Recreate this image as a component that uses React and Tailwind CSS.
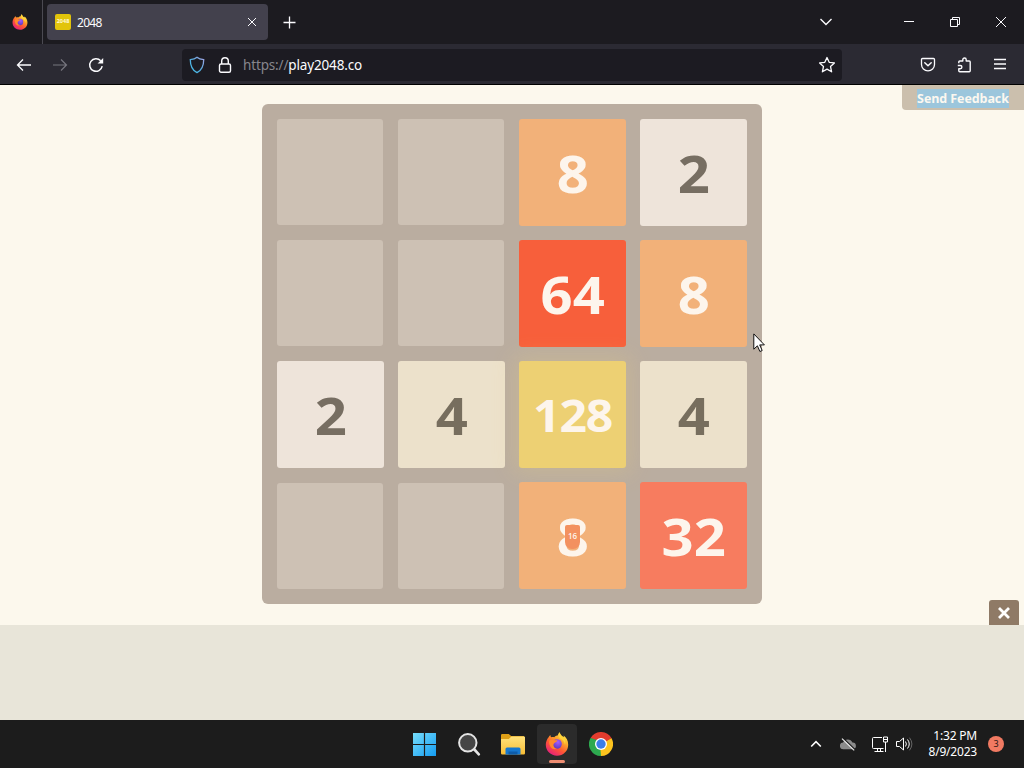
import React from 'react';

const TILE_STYLES = {
  0: 'size-[106.250px] bg-[#cdc1b4]',
  2: 'size-[107px] bg-[#eee4da] text-[#776e62] text-[52px]',
  4: 'size-[107px] bg-[#ece1cb] text-[#776e5e] text-[52px]',
  8: 'size-[107px] bg-[#f2b179] text-[#fdf5ec] text-[52px]',
  32: 'size-[107px] bg-[#f77c5f] text-[#fdf5ec] text-[52px]',
  64: 'size-[107px] bg-[#f75f3b] text-[#fdf5ec] text-[52px]',
  128: 'size-[107px] bg-[#edd073] text-[#fdf5ec] text-[44.500px] tracking-[-1px] shadow-[0_0_22px_6px_rgba(243,215,116,0.2)]',
};

const board = [
  [0, 0, 8, 2],
  [0, 0, 64, 8],
  [2, 4, 128, 4],
  [0, 0, 8, 32],
];

const Firefox = ({ id, className }) => (
  <svg viewBox="0 0 24 24" className={className}>
    <defs>
      <linearGradient id={`${id}-body`} x1="0.85" y1="0.05" x2="0.25" y2="0.95">
        <stop offset="0" stopColor="#fff44f" />
        <stop offset="0.35" stopColor="#ffa22a" />
        <stop offset="0.65" stopColor="#ff5634" />
        <stop offset="1" stopColor="#e6217a" />
      </linearGradient>
      <radialGradient id={`${id}-globe`} cx="0.6" cy="0.3" r="0.8">
        <stop offset="0" stopColor="#a45cff" />
        <stop offset="1" stopColor="#5334b5" />
      </radialGradient>
    </defs>
    <path
      fill={`url(#${id}-body)`}
      d="M3.6 5.3C4 4.4 4.7 3.6 5.4 3.1c0 1 .3 1.7.7 2.2 1-.4 2.1-.4 3.1-.1C10.7 4 12 3.4 13 3.3c0-1 .6-2.2 1.7-3 .5 2.5 2.1 3.6 3.8 5 .3-.4.3-1 .1-1.7 2.8 1.900 4.600 5.200 4.600 9.100C23.200 19 18.200 23.700 12 23.700S.8 19 .8 12.800c0-2.900 1.100-5.500 2.800-7.500z"
    />
    <circle cx="12" cy="12" r="4.800" fill={`url(#${id}-globe)`} />
    <path
      fill="#ff8a2b"
      d="M4.200 8.700c1.700-1.500 4-1.600 5.700-.5 1 .1 2.200-.2 2.600.5-.3 1-1.900 1.200-2.400 1.900-.8.700-1.600 1.400-1.700 2.600.2 2 1.900 3.400 3.700 3.400-2.300 1.200-4.900.4-6.300-1.400-1.200-1.700-2-4.200-1.600-6.500z"
    />
    <path fill="#ffd43a" d="M14.700.3c.5 2.500 2.100 3.600 3.800 5 2 1.900 2.300 4.800 1.500 7.700-.3-3-2.300-5.300-4.700-6.400C13.300 5.500 13 3.300 14.700.3z" />
  </svg>
);

const Chrome = () => (
  <svg viewBox="0 0 24 24" className="size-6">
    <path fill="#e33b2e" d="M12 12 1.600 6A12 12 0 0 1 22.400 6z" />
    <path fill="#fcc31e" d="M12 12 22.400 6A12 12 0 0 1 12 24z" />
    <path fill="#2da94f" d="M12 12v12A12 12 0 0 1 1.600 6z" />
    <path fill="#e33b2e" d="M12 6h10.400L17 9.500z" />
    <path fill="#fcc31e" d="M17.200 15 12 24l-.5-6z" />
    <path fill="#2da94f" d="M6.800 15 1.600 6 8 8z" />
    <circle cx="12" cy="12" r="6" fill="#fff" />
    <circle cx="12" cy="12" r="4.700" fill="#3b7de9" />
  </svg>
);

const TabBar = () => (
  <div className="flex h-11 bg-[#1c1b20] text-[#fbfbfe]">
    <div className="flex w-[43px] items-center justify-center border-r border-[#4b4a52] pr-0.5">
      <Firefox id="view" className="size-4" />
    </div>
    <div className="mt-1 ml-1 flex h-9 w-[221px] items-center rounded-[4px] bg-[#43414d] pl-2 pr-[10px]">
      <div className="flex size-4 items-center justify-center rounded-[2px] bg-[#e2c40b] text-[5.500px] font-bold leading-none text-[#fff9d8]">
        2048
      </div>
      <span className="mt-px ml-1.5 grow text-[12px] tracking-[-0.700px]">2048</span>
      <svg viewBox="0 0 12 12" className="size-3" stroke="currentColor" strokeWidth="1">
        <path d="M2 2l8 8M10 2l-8 8" />
      </svg>
    </div>
    <svg viewBox="0 0 14 14" className="mt-4 ml-[15px] size-[14px]" stroke="currentColor" strokeWidth="1.300">
      <path d="M6.500 .5v12M.5 6.500h12" />
    </svg>
    <div className="grow" />
    <svg viewBox="0 0 14 14" className="mt-[15px] mr-[70px] size-[14px]" fill="none" stroke="currentColor" strokeWidth="1.400">
      <path d="M1.500 4 7 9.500 12.500 4" />
    </svg>
    <svg viewBox="0 0 12 12" className="mt-4 mr-[34px] size-3" stroke="currentColor">
      <path d="M1 5.500h10" />
    </svg>
    <svg viewBox="0 0 12 12" className="mt-4 mr-[34px] size-3" fill="none" stroke="currentColor">
      <path d="M1.500 3.500h7v7h-7zM3.500 3.500v-2h7v7h-2" />
    </svg>
    <svg viewBox="0 0 12 12" className="mt-4 mr-[17px] size-3" stroke="currentColor">
      <path d="M1 1l10 10M11 1 1 11" />
    </svg>
  </div>
);

const NavBar = () => (
  <div className="flex h-[41px] items-center border-b border-black bg-[#2b2a33] pt-px text-[#fbfbfe]">
    <svg viewBox="0 0 16 16" className="ml-4 size-4" fill="none" stroke="currentColor" strokeWidth="1.300">
      <path d="M15 8H1.500M7 2.500 1.500 8 7 13.500" />
    </svg>
    <svg viewBox="0 0 16 16" className="ml-5 size-4 text-[#77767f]" fill="none" stroke="currentColor" strokeWidth="1.200">
      <path d="M1 8h13.500M9 2.500 14.500 8 9 13.500" />
    </svg>
    <svg viewBox="0 0 16 16" className="ml-5 size-4" fill="none" stroke="currentColor" strokeWidth="1.500">
      <path d="M14.200 9.200A6.300 6.300 0 1 1 12.700 3.800" />
      <path d="M15.200 1v5.600H9.600z" fill="currentColor" stroke="none" />
    </svg>

    <div className="ml-[78px] flex h-8 w-[660px] items-center rounded-[4px] bg-[#1c1b22] pl-[7px] pr-[6px]">
      <svg viewBox="0 0 16 18" className="h-[18px] w-4" fill="none" strokeWidth="1.300">
        <defs>
          <linearGradient id="shield" x1="1" y1="0" x2="0" y2="1">
            <stop offset="0" stopColor="#a5a4e6" />
            <stop offset="0.500" stopColor="#55a9da" />
            <stop offset="1" stopColor="#43c3ef" />
          </linearGradient>
        </defs>
        <path stroke="url(#shield)" d="M8 1.300C6.500 2.600 4 3.400 1.300 3.700c0 6.300 1.400 10.300 6.700 12.900 5.300-2.600 6.700-6.600 6.700-12.900C12 3.400 9.500 2.600 8 1.300z" />
      </svg>
      <svg viewBox="0 0 14 18" className="ml-[13px] h-[18px] w-[14px]" fill="none" stroke="currentColor" strokeWidth="1.400">
        <rect x="1.500" y="8" width="11" height="8.200" rx="1.500" />
        <path d="M3.700 8V5a3.300 3.300 0 0 1 6.600 0v3" />
      </svg>
      <p className="mt-px ml-[11px] grow text-[13.500px] tracking-[-0.150px]">
        <span className="text-[#87868d]">https://</span>play2048.co
      </p>
      <svg viewBox="0 0 18 18" className="size-[18px]" fill="none" stroke="currentColor" strokeWidth="1.300" strokeLinejoin="round">
        <path d="M9 1.500l2.200 4.800 5.200.6-3.900 3.500 1.100 5.400L9 13.100l-4.600 2.700 1.100-5.400L1.600 6.900l5.200-.6z" />
      </svg>
    </div>

    <div className="grow" />
    <svg viewBox="0 0 16 16" className="mr-5 size-4" fill="none" stroke="currentColor" strokeWidth="1.300" strokeLinejoin="round">
      <path d="M2.500 1.500h11a1 1 0 0 1 1 1v5a6.500 6.300 0 0 1-13 0v-5a1 1 0 0 1 1-1z" />
      <path d="M4.800 5.800 8 8.800l3.200-3" strokeWidth="1.500" strokeLinecap="round" />
    </svg>
    <svg viewBox="0 0 16 16" className="mr-[21px] size-4" fill="none" stroke="currentColor" strokeWidth="1.400" strokeLinejoin="round">
      <path d="M2.800 6.200V5a1 1 0 0 1 1-1h3V2.700a1.700 1.700 0 0 1 3.400 0V4h3a1 1 0 0 1 1 1v8.700a1 1 0 0 1-1 1H3.800a1 1 0 0 1-1-1v-2h1.500a1.500 1.500 0 0 0 0-3.200H1.800" />
    </svg>
    <svg viewBox="0 0 14 14" className="mr-[17px] mb-px size-[14px]" stroke="currentColor" strokeWidth="1.300">
      <path d="M1 2.500h12M1 7h12M1 11.500h12" />
    </svg>
  </div>
);

const Tile = ({ value, merging }) => (
  <div
    className={`relative flex items-center justify-center rounded-[3px] pt-px font-['Open_Sans','Noto_Sans',sans-serif] font-bold leading-none ${TILE_STYLES[value]}`}
  >
    {value > 0 && <span className="scale-x-[1.080]">{value}</span>}
    {merging && (
      <span className="absolute top-[43px] left-[46px] flex h-[24px] w-[15px] items-start justify-center rounded-[2px] rounded-b-[7px] bg-[#f3915f] pt-[7px] text-[8px] font-semibold leading-none tracking-normal">
        {merging}
      </span>
    )}
  </div>
);

const Game = () => (
  <main className="relative h-[540px] bg-[#fcf8ed] pt-[19px]">
    <div className="mx-auto grid size-[500px] grid-cols-[repeat(4,107px)] grid-rows-[repeat(4,107px)] content-start gap-[14px] rounded-[6px] bg-[#baada0] pt-[15px] pl-[15px] [&>*:nth-child(n+13)]:self-end">
      {board.map((row, y) =>
        row.map((value, x) => <Tile key={`${y}-${x}`} value={value} merging={y === 3 && x === 2 ? 16 : null} />)
      )}
    </div>

    <button className="absolute top-0 right-0 flex h-[25px] w-[122px] items-center justify-center rounded-bl-[4px] bg-[#cbbfad] pt-0.5 font-['Open_Sans','Noto_Sans',sans-serif] text-[12.500px] font-bold tracking-[-0.080px] text-[#fcf8f0]">
      <span className="bg-[#9cc6dc] leading-[19px] whitespace-nowrap">Send Feedback</span>
    </button>

    <button className="absolute right-[5px] bottom-0 flex h-[25px] w-[30px] items-center justify-center rounded-t-[3px] bg-[#8f7a66]">
      <svg viewBox="0 0 12 12" className="size-3" stroke="#fff" strokeWidth="2.800">
        <path d="M1 1l10 10M11 1 1 11" />
      </svg>
    </button>

    <svg viewBox="0 0 13 20" className="absolute top-[248px] left-[753px] h-5 w-[13px]">
      <path d="M.8.900v15.300l3.600-3.400 2.500 5.700 2.300-1-2.500-5.600h4.700z" fill="#fff" stroke="#111" strokeWidth="1" />
    </svg>
  </main>
);

const Taskbar = () => (
  <footer className="flex h-12 items-center bg-[#1c1c1c] text-white">
    <div className="ml-[412px] flex items-center">
      <svg viewBox="0 0 24 24" className="size-6">
        <defs>
          <linearGradient id="win" x1="0" y1="0" x2="24" y2="24" gradientUnits="userSpaceOnUse">
            <stop offset="0" stopColor="#7be0fb" />
            <stop offset="1" stopColor="#149cf2" />
          </linearGradient>
        </defs>
        <path fill="url(#win)" d="M1 1h10.900v10.900H1zM13.100 1H24v10.900H13.100zM1 13.100h10.900V24H1zM13.100 13.100H24V24H13.100z" />
      </svg>
      <svg viewBox="0 0 24 24" className="ml-[21px] size-6" fill="none" stroke="#e4e4e4">
        <path d="M16.500 16.500l5.300 5.800" strokeWidth="2.600" strokeLinecap="round" />
        <circle cx="10.800" cy="10.800" r="8.700" fill="#454545" strokeWidth="2" />
      </svg>
      <svg viewBox="0 0 26 24" className="ml-[19px] h-6 w-[26px]">
        <defs>
          <linearGradient id="folder" x1="0" y1="0" x2="0" y2="1">
            <stop offset="0" stopColor="#ffe27c" />
            <stop offset="1" stopColor="#f8bd35" />
          </linearGradient>
        </defs>
        <path fill="#dfa017" d="M1 3.200q0-1.200 1.200-1.200h6.600l2.300 2H24v5H1z" />
        <path fill="url(#folder)" d="M1 7h7.800l2.600-2.500h12.800q.8 0 .8.800v16q0 1.200-1.200 1.200H2.200Q1 22.500 1 21.300z" />
        <path fill="#1577cf" d="M5.500 17q0-1.500 1.500-1.500h12q1.500 0 1.500 1.500v5.500h-15z" />
        <path fill="#0e5ca9" d="M8.500 19.500h9v3h-9z" />
      </svg>
      <div className="relative ml-[11px] flex h-10 w-10 items-center justify-center rounded-[4px] bg-[#2b2b2b]">
        <Firefox id="task" className="size-6" />
        <span className="absolute bottom-px left-3 h-[3px] w-4 rounded-full bg-[#ee8d72]" />
      </div>
      <div className="ml-3">
        <Chrome />
      </div>
    </div>

    <div className="grow" />
    <svg viewBox="0 0 12 12" className="mr-[18px] size-3" fill="none" stroke="currentColor" strokeWidth="1.600">
      <path d="M1.200 8.500 6 3.700l4.800 4.800" />
    </svg>
    <svg viewBox="0 0 16 16" className="mr-[15px] size-4">
      <path fill="#8b8b8b" d="M3.300 13.200a3.300 3.300 0 0 1-.2-6.600A5 5 0 0 1 12.400 6.600 3.300 3.300 0 0 1 12.800 13.200z" />
      <path d="M2.900 1.900 15.200 13.700" stroke="#1c1c1c" strokeWidth="1.200" />
      <path d="M2 2.600 14.200 14.400" stroke="#e9e9e9" strokeWidth="1.200" />
    </svg>
    <svg viewBox="0 0 18 18" className="mr-[6px] size-[18px]" fill="none" stroke="currentColor">
      <path d="M11 2.500H2.500q-1 0-1 1v9q0 1 1 1h10M6.500 13.500v3M9.500 13.500v3M3.500 16.500h9M12.500 2h4v5h-4zM14.500 7v10M13 4.500h3" />
    </svg>
    <svg viewBox="0 0 18 18" className="mr-[14px] size-[18px]" fill="none" stroke="currentColor">
      <path d="M1.500 6.500h3l4-3.500v12l-4-3.500h-3zM10.500 6.500q1.800 2.500 0 5M12.500 4.500q3.500 4.500 0 9" />
      <path d="M14.500 2.700q4.800 6.300 0 12.600" stroke="#666" />
    </svg>
    <div className="mr-[11px] w-[50px] text-right text-[12px] leading-4 tracking-[-0.200px] whitespace-nowrap">
      <p>1:32 PM</p>
      <p>8/9/2023</p>
    </div>
    <div className="mr-5 flex size-4 items-center justify-center rounded-full bg-[#f17a62] text-[9px] text-[#2a1512]">3</div>
  </footer>
);

const App = () => {
  return (
    <div className="flex h-[768px] w-[1024px] flex-col overflow-hidden font-['Noto_Sans','Open_Sans',sans-serif]">
      <TabBar />
      <NavBar />
      <Game />
      <div className="h-[95px] bg-[#e8e5d9]" />
      <Taskbar />
    </div>
  );
};

export default App;
